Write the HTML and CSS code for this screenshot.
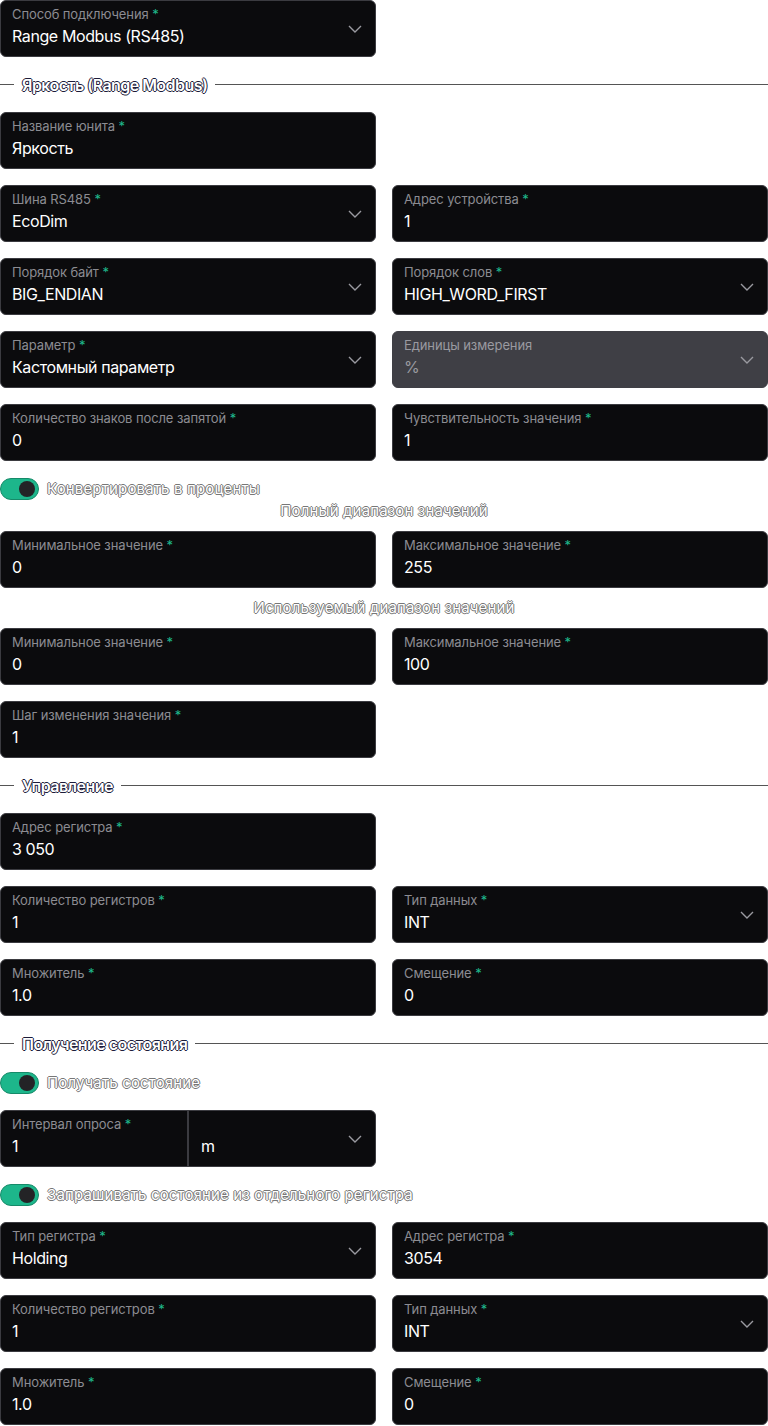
FILE: index.html
```html
<!DOCTYPE html>
<html lang="ru">
<head>
    <meta charset="UTF-8">
    <meta name="viewport" content="width=device-width, initial-scale=1.0">
    <title>Range Modbus</title>
    <link rel="stylesheet" href="styles.css">
</head>
<body>

<div class="form">

    <div class="row">
        <div class="field">
            <div class="field-body">
                <div class="label">Способ подключения <span class="req">*</span></div>
                <div class="value">Range Modbus (RS485)</div>
            </div>
            <svg class="chevron" width="14" height="8" viewBox="0 0 14 8"><path d="M1 1l6 6 6-6" fill="none" stroke="#9a9aa0" stroke-width="1.4"/></svg>
        </div>
    </div>

    <div class="section"><span class="section-title">Яркость (Range Modbus)</span></div>

    <div class="row">
        <div class="field">
            <div class="field-body">
                <div class="label">Название юнита <span class="req">*</span></div>
                <div class="value">Яркость</div>
            </div>
        </div>
    </div>

    <div class="row">
        <div class="field">
            <div class="field-body">
                <div class="label">Шина RS485 <span class="req">*</span></div>
                <div class="value">EcoDim</div>
            </div>
            <svg class="chevron" width="14" height="8" viewBox="0 0 14 8"><path d="M1 1l6 6 6-6" fill="none" stroke="#9a9aa0" stroke-width="1.4"/></svg>
        </div>
        <div class="field">
            <div class="field-body">
                <div class="label">Адрес устройства <span class="req">*</span></div>
                <div class="value">1</div>
            </div>
        </div>
    </div>

    <div class="row">
        <div class="field">
            <div class="field-body">
                <div class="label">Порядок байт <span class="req">*</span></div>
                <div class="value">BIG_ENDIAN</div>
            </div>
            <svg class="chevron" width="14" height="8" viewBox="0 0 14 8"><path d="M1 1l6 6 6-6" fill="none" stroke="#9a9aa0" stroke-width="1.4"/></svg>
        </div>
        <div class="field">
            <div class="field-body">
                <div class="label">Порядок слов <span class="req">*</span></div>
                <div class="value">HIGH_WORD_FIRST</div>
            </div>
            <svg class="chevron" width="14" height="8" viewBox="0 0 14 8"><path d="M1 1l6 6 6-6" fill="none" stroke="#9a9aa0" stroke-width="1.4"/></svg>
        </div>
    </div>

    <div class="row">
        <div class="field">
            <div class="field-body">
                <div class="label">Параметр <span class="req">*</span></div>
                <div class="value">Кастомный параметр</div>
            </div>
            <svg class="chevron" width="14" height="8" viewBox="0 0 14 8"><path d="M1 1l6 6 6-6" fill="none" stroke="#9a9aa0" stroke-width="1.4"/></svg>
        </div>
        <div class="field disabled">
            <div class="field-body">
                <div class="label">Единицы измерения</div>
                <div class="value">%</div>
            </div>
            <svg class="chevron" width="14" height="8" viewBox="0 0 14 8"><path d="M1 1l6 6 6-6" fill="none" stroke="#9a9aa0" stroke-width="1.4"/></svg>
        </div>
    </div>

    <div class="row">
        <div class="field">
            <div class="field-body">
                <div class="label">Количество знаков после запятой <span class="req">*</span></div>
                <div class="value">0</div>
            </div>
        </div>
        <div class="field">
            <div class="field-body">
                <div class="label">Чувствительность значения <span class="req">*</span></div>
                <div class="value">1</div>
            </div>
        </div>
    </div>

    <div class="switch-row">
        <span class="switch"><span class="knob"></span></span>
        <span class="switch-label">Конвертировать в проценты</span>
    </div>

    <div class="range">
        <div class="range-title">Полный диапазон значений</div>
        <div class="row">
            <div class="field">
                <div class="field-body">
                    <div class="label">Минимальное значение <span class="req">*</span></div>
                    <div class="value">0</div>
                </div>
            </div>
            <div class="field">
                <div class="field-body">
                    <div class="label">Максимальное значение <span class="req">*</span></div>
                    <div class="value">255</div>
                </div>
            </div>
        </div>
        <div class="range-title">Используемый диапазон значений</div>
        <div class="row">
            <div class="field">
                <div class="field-body">
                    <div class="label">Минимальное значение <span class="req">*</span></div>
                    <div class="value">0</div>
                </div>
            </div>
            <div class="field">
                <div class="field-body">
                    <div class="label">Максимальное значение <span class="req">*</span></div>
                    <div class="value">100</div>
                </div>
            </div>
        </div>
    </div>

    <div class="row">
        <div class="field">
            <div class="field-body">
                <div class="label">Шаг изменения значения <span class="req">*</span></div>
                <div class="value">1</div>
            </div>
        </div>
    </div>

    <div class="section"><span class="section-title">Управление</span></div>

    <div class="row">
        <div class="field">
            <div class="field-body">
                <div class="label">Адрес регистра <span class="req">*</span></div>
                <div class="value">3 050</div>
            </div>
        </div>
    </div>

    <div class="row">
        <div class="field">
            <div class="field-body">
                <div class="label">Количество регистров <span class="req">*</span></div>
                <div class="value">1</div>
            </div>
        </div>
        <div class="field">
            <div class="field-body">
                <div class="label">Тип данных <span class="req">*</span></div>
                <div class="value">INT</div>
            </div>
            <svg class="chevron" width="14" height="8" viewBox="0 0 14 8"><path d="M1 1l6 6 6-6" fill="none" stroke="#9a9aa0" stroke-width="1.4"/></svg>
        </div>
    </div>

    <div class="row">
        <div class="field">
            <div class="field-body">
                <div class="label">Множитель <span class="req">*</span></div>
                <div class="value">1.0</div>
            </div>
        </div>
        <div class="field">
            <div class="field-body">
                <div class="label">Смещение <span class="req">*</span></div>
                <div class="value">0</div>
            </div>
        </div>
    </div>

    <div class="section"><span class="section-title">Получение состояния</span></div>

    <div class="switch-row">
        <span class="switch"><span class="knob"></span></span>
        <span class="switch-label">Получать состояние</span>
    </div>

    <div class="row">
        <div class="field split">
            <div class="field-body split-left">
                <div class="label">Интервал опроса <span class="req">*</span></div>
                <div class="value">1</div>
            </div>
            <div class="split-right">
                <div class="value">m</div>
            </div>
            <svg class="chevron" width="14" height="8" viewBox="0 0 14 8"><path d="M1 1l6 6 6-6" fill="none" stroke="#9a9aa0" stroke-width="1.4"/></svg>
        </div>
    </div>

    <div class="switch-row">
        <span class="switch"><span class="knob"></span></span>
        <span class="switch-label">Запрашивать состояние из отдельного регистра</span>
    </div>

    <div class="row">
        <div class="field">
            <div class="field-body">
                <div class="label">Тип регистра <span class="req">*</span></div>
                <div class="value">Holding</div>
            </div>
            <svg class="chevron" width="14" height="8" viewBox="0 0 14 8"><path d="M1 1l6 6 6-6" fill="none" stroke="#9a9aa0" stroke-width="1.4"/></svg>
        </div>
        <div class="field">
            <div class="field-body">
                <div class="label">Адрес регистра <span class="req">*</span></div>
                <div class="value">3054</div>
            </div>
        </div>
    </div>

    <div class="row">
        <div class="field">
            <div class="field-body">
                <div class="label">Количество регистров <span class="req">*</span></div>
                <div class="value">1</div>
            </div>
        </div>
        <div class="field">
            <div class="field-body">
                <div class="label">Тип данных <span class="req">*</span></div>
                <div class="value">INT</div>
            </div>
            <svg class="chevron" width="14" height="8" viewBox="0 0 14 8"><path d="M1 1l6 6 6-6" fill="none" stroke="#9a9aa0" stroke-width="1.4"/></svg>
        </div>
    </div>

    <div class="row">
        <div class="field">
            <div class="field-body">
                <div class="label">Множитель <span class="req">*</span></div>
                <div class="value">1.0</div>
            </div>
        </div>
        <div class="field">
            <div class="field-body">
                <div class="label">Смещение <span class="req">*</span></div>
                <div class="value">0</div>
            </div>
        </div>
    </div>

</div>

</body>
</html>
```

FILE: styles.css
```css
body {
    font-family: Inter, "Noto Sans", sans-serif;
    background-color: #ffffff;
    margin: 0;
    padding: 0;
}
.form {
    width: 768px;
    display: flex;
    flex-direction: column;
    gap: 16px;
}
.row {
    display: grid;
    grid-template-columns: 1fr 1fr;
    gap: 16px;
}
.field {
    height: 57px;
    box-sizing: border-box;
    background-color: #0b0b0d;
    border: 1px solid #3b3b40;
    border-radius: 6px;
    padding: 0 13px 0 11px;
    display: flex;
    align-items: center;
}
.field-body {
    flex: 1;
    align-self: flex-start;
    padding-top: 5px;
    min-width: 0;
}
.label {
    font-size: 13px;
    line-height: 16px;
    color: #8c8c92;
    white-space: nowrap;
    letter-spacing: -0.1px;
}
.req {
    color: #1fb98c;
}
.value {
    font-size: 16px;
    line-height: 20px;
    margin-top: 4px;
    color: #ffffff;
    letter-spacing: -0.4px;
}
.chevron {
    flex: none;
}
.disabled {
    background-color: #3f3f45;
    border-color: #3f3f45;
}
.disabled .label {
    color: #9a9aa0;
}
.disabled .value {
    color: #9a9aa0;
}
.split {
    padding-left: 0;
}
.split-left {
    flex: none;
    width: 188px;
    padding-left: 11px;
    height: 100%;
    box-sizing: border-box;
    border-right: 2px solid #3b3b40;
}
.split-right {
    flex: 1;
    padding-left: 12px;
    padding-top: 21px;
    align-self: flex-start;
}
.section {
    height: 23px;
    display: flex;
    align-items: center;
    gap: 8px;
}
.section::before {
    content: "";
    width: 14px;
    border-top: 1px solid #555;
}
.section::after {
    content: "";
    flex: 1;
    border-top: 1px solid #555;
}
.section-title {
    font-size: 16px;
    font-weight: 600;
    color: #ffffff;
    letter-spacing: -0.55px;
    text-shadow: 1px 0 0 #1c1c3a, -1px 0 0 #1c1c3a, 0 1px 0 #1c1c3a, 0 -1px 0 #1c1c3a;
}
.switch-row {
    height: 23px;
    display: flex;
    align-items: center;
    gap: 8px;
}
.switch {
    width: 39px;
    height: 22px;
    box-sizing: border-box;
    border-radius: 11px;
    background-color: #1db68b;
    border: 1px solid #168a69;
    display: flex;
    align-items: center;
    justify-content: flex-end;
    padding-right: 3px;
}
.knob {
    width: 16px;
    height: 16px;
    border-radius: 50%;
    background-color: #232326;
}
.switch-label, .range-title {
    font-size: 15px;
    color: #ffffff;
    letter-spacing: 0.15px;
    text-shadow: 1px 0 0 #777, -1px 0 0 #777, 0 1px 0 #777, 0 -1px 0 #777;
}
.range {
    margin-top: -16px;
    display: flex;
    flex-direction: column;
}
.range-title {
    height: 22px;
    line-height: 22px;
    text-align: center;
    margin: 0 0 9px;
}
.range .row + .range-title {
    margin-top: 9px;
}
```
